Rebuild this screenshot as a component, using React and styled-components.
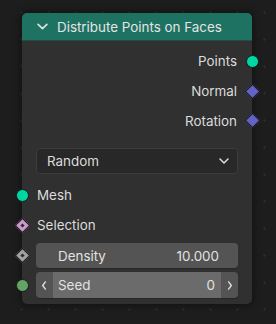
import React from "react";
import styled, { createGlobalStyle } from "styled-components";

const GlobalStyle = createGlobalStyle`
  html, body {
    margin: 0;
    padding: 0;
    background: #1d1d1d;
  }
  body {
    font-family: Inter, "Noto Sans", sans-serif;
  }
`;

const Canvas = styled.div`
  width: 276px;
  height: 324px;
  overflow: hidden;
  background-color: #1d1d1d;
  background-image: radial-gradient(circle, #2b2b2b 1px, transparent 1.2px);
  background-size: 27px 27px;
  background-position: 8px -1px;
  padding: 13px 0 0 22px;
  box-sizing: border-box;
`;

const Node = styled.div`
  width: 230px;
  background: #303030;
  border-radius: 5px;
  box-shadow: 0 0 6px 2px rgba(0, 0, 0, 0.35);
  padding-bottom: 6px;
`;

const Header = styled.div`
  height: 28px;
  background: #1e7261;
  border-radius: 5px 5px 0 0;
  display: flex;
  align-items: center;
  gap: 9px;
  padding-left: 15px;
  color: #e4e4e4;
  font-size: 13.4px;
  border-bottom: 1px solid #2a4a42;
  box-sizing: border-box;
`;

const Body = styled.div`
  display: flex;
  flex-direction: column;
  padding-top: 5px;
`;

const Row = styled.div`
  position: relative;
  height: ${(p) => p.h || 30}px;
  display: flex;
  align-items: center;
  justify-content: ${(p) => (p.out ? "flex-end" : "flex-start")};
  padding: 0 15px;
  color: #dcdcdc;
  font-size: 13.4px;
`;

const Socket = styled.span`
  position: absolute;
  top: 50%;
  ${(p) => (p.out ? "right: -6.5px;" : "left: -6.5px;")}
  width: 13px;
  height: 13px;
  margin-top: -6.5px;
  box-sizing: border-box;
  background: ${(p) => p.color};
  border: 1px solid #1a1a1a;
  border-radius: 50%;
`;

const Diamond = styled.span`
  position: absolute;
  top: 50%;
  ${(p) => (p.out ? "right: -5.5px;" : "left: -5.5px;")}
  width: 11px;
  height: 11px;
  margin-top: -5.5px;
  box-sizing: border-box;
  background: ${(p) => p.color};
  border: 1px solid #1a1a1a;
  transform: rotate(45deg);
  display: flex;
  align-items: center;
  justify-content: center;
  &::after {
    content: "";
    display: ${(p) => (p.dot ? "block" : "none")};
    width: 3px;
    height: 3px;
    background: #2a2a2a;
  }
`;

const Select = styled.div`
  margin: 13px 14px 6px 14px;
  height: 26px;
  box-sizing: border-box;
  background: #282828;
  border: 1px solid #3c3c3c;
  border-radius: 4px;
  display: flex;
  align-items: center;
  justify-content: space-between;
  padding: 0 8px 0 10px;
  color: #dcdcdc;
  font-size: 13.4px;
`;

const FieldRow = styled.div`
  position: relative;
  height: ${(p) => p.h}px;
  display: flex;
  padding: 0 14px;
  margin-top: ${(p) => p.mt || 0}px;
`;

const Field = styled.div`
  flex: 1;
  border-radius: 4px;
  background: #545454;
  display: flex;
  align-items: stretch;
  overflow: hidden;
  color: #e2e2e2;
  font-size: 13.4px;
  box-shadow: 0 1px 0 #262626;
`;

const FieldBody = styled.div`
  flex: 1;
  display: flex;
  align-items: center;
  justify-content: space-between;
  padding: 0 ${(p) => (p.stepper ? 6 : 19)}px 0 ${(p) => (p.stepper ? 5 : 22)}px;
  background: ${(p) => (p.stepper ? "#6b6b6b" : "transparent")};
`;

const Arrow = styled.div`
  width: 17px;
  display: flex;
  align-items: center;
  justify-content: center;
`;

const Chevron = ({ size = 10, color = "#e0e0e0", dir = "down" }) => {
  const pts = {
    down: "1,3 5,7 9,3",
    left: "6,1 3,5 6,9",
    right: "4,1 7,5 4,9",
  }[dir];
  return (
    <svg width={size} height={size} viewBox="0 0 10 10">
      <polyline points={pts} fill="none" stroke={color} strokeWidth="1.5" strokeLinecap="round" strokeLinejoin="round" />
    </svg>
  );
};

export default function App() {
  return (
    <>
      <GlobalStyle />
      <Canvas>
        <Node>
          <Header>
            <Chevron size={11} />
            <span>Distribute Points on Faces</span>
          </Header>
          <Body>
            <Row out>
              Points
              <Socket out color="#00d6a3" />
            </Row>
            <Row out>
              Normal
              <Diamond out color="#6363c7" />
            </Row>
            <Row out h={29}>
              Rotation
              <Diamond out color="#6363c7" />
            </Row>
            <Select>
              <span>Random</span>
              <Chevron size={10} />
            </Select>
            <Row>
              Mesh
              <Socket color="#00d6a3" />
            </Row>
            <Row>
              Selection
              <Diamond color="#cc99cc" dot />
            </Row>
            <FieldRow h={25} mt={3}>
              <Diamond color="#a1a1a1" dot />
              <Field>
                <FieldBody>
                  <span>Density</span>
                  <span>10.000</span>
                </FieldBody>
              </Field>
            </FieldRow>
            <FieldRow h={26} mt={4}>
              <Socket color="#63a363" />
              <Field>
                <Arrow>
                  <Chevron dir="left" size={9} />
                </Arrow>
                <FieldBody stepper>
                  <span>Seed</span>
                  <span>0</span>
                </FieldBody>
                <Arrow>
                  <Chevron dir="right" size={9} />
                </Arrow>
              </Field>
            </FieldRow>
          </Body>
        </Node>
      </Canvas>
    </>
  );
}
